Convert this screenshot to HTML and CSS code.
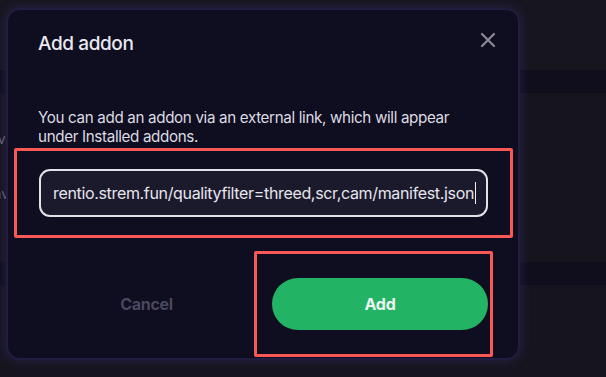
FILE: index.html
```html
<!DOCTYPE html>
<html>
<head>
<meta charset="utf-8">
<link rel="stylesheet" href="styles.css">
</head>
<body>
<div class="page">
  <div class="bg-top"></div>
  <div class="bg-band"></div>
  <div class="bg-mid">
    <div class="side-line l1"><span>Dev.</span></div>
    <div class="side-line l2"><span>Nav</span></div>
  </div>
  <div class="bg-band"></div>
  <div class="bg-bottom"></div>
</div>

<div class="modal">
  <div class="modal-header">
    <div class="title">Add addon</div>
    <svg class="close" width="16" height="16" viewBox="0 0 16 16" fill="none">
      <path d="M2 2 L14 14 M14 2 L2 14" stroke="#8b8997" stroke-width="2.2" stroke-linecap="round"/>
    </svg>
  </div>
  <p class="desc">You can add an addon via an external link, which will appear under Installed addons.</p>
  <div class="mark input-mark">
    <div class="input">rentio.strem.fun/qualityfilter=threed,scr,cam/manifest.json<span class="caret"></span></div>
  </div>
  <div class="footer">
    <div class="cancel">Cancel</div>
    <div class="mark add-mark">
      <div class="add-btn">Add</div>
    </div>
  </div>
</div>
</body>
</html>
```

FILE: styles.css
```css
html, body {
  margin: 0;
  padding: 0;
}
body {
  width: 606px;
  height: 377px;
  overflow: hidden;
  position: relative;
  background: #16151e;
  font-family: Inter, "Noto Sans", sans-serif;
}
.page {
  display: flex;
  flex-direction: column;
  height: 377px;
}
.bg-top { height: 70px; background: #17161f; }
.bg-band { height: 23px; background: #100e1c; }
.bg-mid {
  height: 169px;
  background: #16151e;
  display: flex;
  flex-direction: column;
}
.bg-bottom { flex: 1; background: #16151f; }
.side-line {
  width: 9px;
  overflow: hidden;
  display: flex;
  justify-content: flex-end;
  color: #6e6c7b;
  font-size: 14px;
  line-height: 16px;
  white-space: nowrap;
}
.l1 { margin-top: 38px; }
.l2 { margin-top: 39px; }

.modal {
  position: absolute;
  left: 8px;
  top: 10px;
  width: 510px;
  height: 348px;
  box-sizing: border-box;
  padding: 22px 30px 0 30px;
  background: #0f0d20;
  border-radius: 12px;
  box-shadow: 0 0 0 2px #211c40, 0 0 10px 4px rgba(50, 42, 100, 0.45);
  display: flex;
  flex-direction: column;
}
.modal-header {
  display: flex;
  justify-content: space-between;
  align-items: flex-start;
  height: 24px;
}
.title {
  font-size: 19px;
  line-height: 24px;
  font-weight: 500;
  color: #e9e8ef;
  letter-spacing: -0.4px;
}
.close {
  margin-right: -8px;
  display: block;
}
.desc {
  margin: 52px 0 0 0;
  font-size: 15.2px;
  line-height: 19px;
  color: #dcdbe3;
  letter-spacing: -0.35px;
}
.mark {
  border: 3px solid #fa5757;
  border-radius: 2px;
}
.input-mark {
  margin: 2px -25px 0 -24px;
  padding: 18px 22px 18px 22px;
}
.input {
  box-sizing: border-box;
  height: 48px;
  border: 2px solid #e3e2e9;
  border-radius: 11px;
  background: #1b1a2c;
  color: #e6e5ec;
  font-size: 16px;
  line-height: 44px;
  padding-left: 12px;
  white-space: nowrap;
  overflow: hidden;
  letter-spacing: -0.34px;
  display: flex;
  align-items: center;
}
.caret {
  display: inline-block;
  width: 1px;
  height: 22px;
  background: #f0f0f0;
  margin-left: 1px;
}
.footer {
  margin-top: 13px;
  display: grid;
  grid-template-columns: 1fr 1fr;
  column-gap: 16px;
  align-items: center;
}
.cancel {
  text-align: center;
  font-size: 16px;
  font-weight: 700;
  color: #4a475e;
  letter-spacing: -0.3px;
}
.add-mark {
  margin: 0 -5px 0 -17px;
  padding: 24px 2px 24px 15px;
}
.add-btn {
  height: 52px;
  border-radius: 26px;
  background: #22b365;
  color: #eef5f0;
  font-size: 16px;
  font-weight: 700;
  line-height: 52px;
  text-align: center;
  letter-spacing: -0.2px;
}
```
